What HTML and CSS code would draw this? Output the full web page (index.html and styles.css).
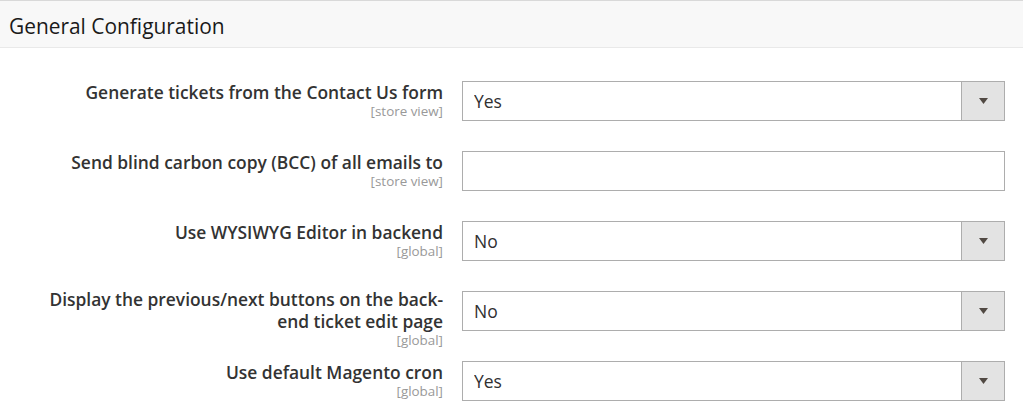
FILE: index.html
```html
<!DOCTYPE html>
<html lang="en">

<head>
    <meta charset="UTF-8">
    <meta name="viewport" content="width=device-width, initial-scale=1.0">
    <title>General Configuration</title>
    <link rel="stylesheet" href="styles.css">
</head>

<body>
    <div class="section-head">
        <span class="section-title">General Configuration</span>
    </div>

    <div class="fieldset">
        <div class="field">
            <label class="field-label" for="contact_form">
                <span class="label-text">Generate tickets from the Contact Us form</span>
                <span class="scope">[store view]</span>
            </label>
            <div class="select-wrap">
                <select id="contact_form">
                    <option selected>Yes</option>
                    <option>No</option>
                </select>
                <span class="select-arrow">
                    <svg width="9" height="6" viewBox="0 0 9 6"><path d="M0 0h9L4.5 6z" fill="#514943"/></svg>
                </span>
            </div>
        </div>

        <div class="field">
            <label class="field-label" for="bcc_email">
                <span class="label-text">Send blind carbon copy (BCC) of all emails to</span>
                <span class="scope">[store view]</span>
            </label>
            <input type="text" id="bcc_email" class="text-input">
        </div>

        <div class="field">
            <label class="field-label" for="wysiwyg">
                <span class="label-text">Use WYSIWYG Editor in backend</span>
                <span class="scope">[global]</span>
            </label>
            <div class="select-wrap">
                <select id="wysiwyg">
                    <option>Yes</option>
                    <option selected>No</option>
                </select>
                <span class="select-arrow">
                    <svg width="9" height="6" viewBox="0 0 9 6"><path d="M0 0h9L4.5 6z" fill="#514943"/></svg>
                </span>
            </div>
        </div>

        <div class="field">
            <label class="field-label long" for="prev_next">
                <span class="label-text">Display the previous/next buttons on the back-end ticket edit page</span>
                <span class="scope">[global]</span>
            </label>
            <div class="select-wrap">
                <select id="prev_next">
                    <option>Yes</option>
                    <option selected>No</option>
                </select>
                <span class="select-arrow">
                    <svg width="9" height="6" viewBox="0 0 9 6"><path d="M0 0h9L4.5 6z" fill="#514943"/></svg>
                </span>
            </div>
        </div>

        <div class="field">
            <label class="field-label" for="use_cron">
                <span class="label-text">Use default Magento cron</span>
                <span class="scope">[global]</span>
            </label>
            <div class="select-wrap">
                <select id="use_cron">
                    <option selected>Yes</option>
                    <option>No</option>
                </select>
                <span class="select-arrow">
                    <svg width="9" height="6" viewBox="0 0 9 6"><path d="M0 0h9L4.5 6z" fill="#514943"/></svg>
                </span>
            </div>
        </div>
    </div>
</body>

</html>
```

FILE: styles.css
```css
body{
    margin: 0;
    background: #fff;
    font-family: "Open Sans", "Liberation Sans", sans-serif;
    color: #303030;
}

/* section header */
.section-head{
    height: 48px;
    box-sizing: border-box;
    display: flex;
    align-items: center;
    padding: 3px 0 0 9px;
    background-color: #f8f8f8;
    border-top: 1px solid #d9d9d9;
    border-bottom: 1px solid #e9e9e9;
}
.section-title{
    font-size: 20.9px;
    color: #1a1a1a;
}

/* form rows */
.fieldset{
    padding: 33px 18px 0 0;
}
.field{
    display: grid;
    grid-template-columns: 443px 1fr;
    column-gap: 19px;
    height: 40px;
    margin-bottom: 30px;
}
.field-label{
    display: flex;
    flex-direction: column;
    text-align: right;
}
.field-label.long{
    margin-top: -3px;
    margin-left: 40px;
}
.label-text{
    font-size: 17.4px;
    font-weight: 600;
    line-height: 22px;
    color: #333;
}
.scope{
    font-size: 13.4px;
    line-height: 17px;
    color: #999;
}

/* inputs */
.select-wrap{
    display: flex;
    height: 40px;
    box-sizing: border-box;
    border: 1px solid #adadad;
    background: #fff;
}
.select-wrap select{
    flex: 1;
    -webkit-appearance: none;
    appearance: none;
    border: none;
    background: transparent;
    padding: 0 11px;
    font-family: "Open Sans", "Liberation Sans", sans-serif;
    font-size: 17.5px;
    color: #303030;
    outline: none;
}
.select-arrow{
    width: 42px;
    border-left: 1px solid #adadad;
    background-color: #e3e3e3;
    display: flex;
    align-items: center;
    justify-content: center;
}
.text-input{
    height: 40px;
    box-sizing: border-box;
    border: 1px solid #adadad;
    padding: 0 11px;
    font-size: 17.5px;
    outline: none;
}
```
